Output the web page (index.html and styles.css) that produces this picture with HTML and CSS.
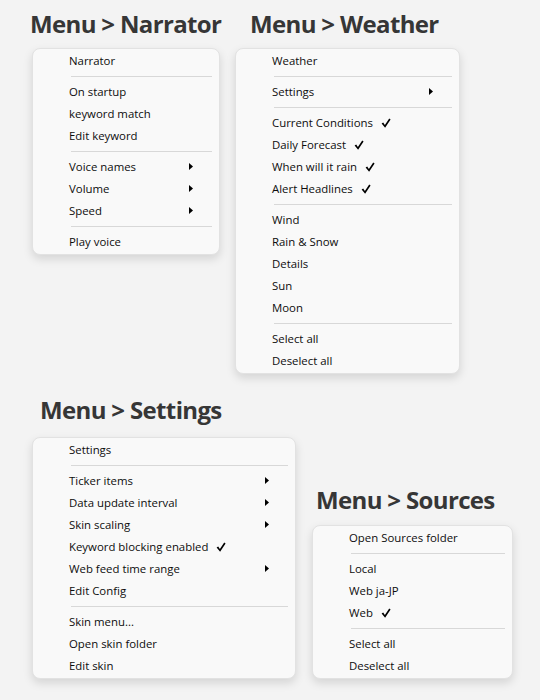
FILE: index.html
```html
<!DOCTYPE html>
<html lang="en">
<head>
<meta charset="utf-8">
<title>Menus</title>
<link rel="stylesheet" href="styles.css">
</head>
<body>
<div class="canvas">
  <div class="row row-top">
    <section class="block b-narrator">
      <h2 class="title">Menu &gt; Narrator</h2>
      <div class="menu">
        <div class="item">Narrator</div>
        <div class="sep"></div>
        <div class="item">On startup</div>
        <div class="item">keyword match</div>
        <div class="item">Edit keyword</div>
        <div class="sep"></div>
        <div class="item sub">Voice names<svg class="arrow" viewBox="0 0 4 7"><polygon points="0,0 4,3.5 0,7"/></svg></div>
        <div class="item sub">Volume<svg class="arrow" viewBox="0 0 4 7"><polygon points="0,0 4,3.5 0,7"/></svg></div>
        <div class="item sub">Speed<svg class="arrow" viewBox="0 0 4 7"><polygon points="0,0 4,3.5 0,7"/></svg></div>
        <div class="sep"></div>
        <div class="item">Play voice</div>
      </div>
    </section>
    <section class="block b-weather">
      <h2 class="title">Menu &gt; Weather</h2>
      <div class="menu">
        <div class="item">Weather</div>
        <div class="sep"></div>
        <div class="item sub">Settings<svg class="arrow" viewBox="0 0 4 7"><polygon points="0,0 4,3.5 0,7"/></svg></div>
        <div class="sep"></div>
        <div class="item">Current Conditions<svg class="check" viewBox="0 0 10 10"><path d="M0.6 5.6 L2.2 4.5 L3.9 6.9 L8.2 0.4 L9.6 1.4 L4.1 9.8 Z"/></svg></div>
        <div class="item">Daily Forecast<svg class="check" viewBox="0 0 10 10"><path d="M0.6 5.6 L2.2 4.5 L3.9 6.9 L8.2 0.4 L9.6 1.4 L4.1 9.8 Z"/></svg></div>
        <div class="item">When will it rain<svg class="check" viewBox="0 0 10 10"><path d="M0.6 5.6 L2.2 4.5 L3.9 6.9 L8.2 0.4 L9.6 1.4 L4.1 9.8 Z"/></svg></div>
        <div class="item">Alert Headlines<svg class="check" viewBox="0 0 10 10"><path d="M0.6 5.6 L2.2 4.5 L3.9 6.9 L8.2 0.4 L9.6 1.4 L4.1 9.8 Z"/></svg></div>
        <div class="sep"></div>
        <div class="item">Wind</div>
        <div class="item">Rain &amp; Snow</div>
        <div class="item">Details</div>
        <div class="item">Sun</div>
        <div class="item">Moon</div>
        <div class="sep"></div>
        <div class="item">Select all</div>
        <div class="item">Deselect all</div>
      </div>
    </section>
  </div>
  <div class="row row-bottom">
    <section class="block b-settings">
      <h2 class="title">Menu &gt; Settings</h2>
      <div class="menu">
        <div class="item">Settings</div>
        <div class="sep"></div>
        <div class="item sub">Ticker items<svg class="arrow" viewBox="0 0 4 7"><polygon points="0,0 4,3.5 0,7"/></svg></div>
        <div class="item sub">Data update interval<svg class="arrow" viewBox="0 0 4 7"><polygon points="0,0 4,3.5 0,7"/></svg></div>
        <div class="item sub">Skin scaling<svg class="arrow" viewBox="0 0 4 7"><polygon points="0,0 4,3.5 0,7"/></svg></div>
        <div class="item">Keyword blocking enabled<svg class="check" viewBox="0 0 10 10"><path d="M0.6 5.6 L2.2 4.5 L3.9 6.9 L8.2 0.4 L9.6 1.4 L4.1 9.8 Z"/></svg></div>
        <div class="item sub">Web feed time range<svg class="arrow" viewBox="0 0 4 7"><polygon points="0,0 4,3.5 0,7"/></svg></div>
        <div class="item">Edit Config</div>
        <div class="sep"></div>
        <div class="item">Skin menu...</div>
        <div class="item">Open skin folder</div>
        <div class="item">Edit skin</div>
      </div>
    </section>
    <section class="block b-sources">
      <h2 class="title">Menu &gt; Sources</h2>
      <div class="menu">
        <div class="item">Open Sources folder</div>
        <div class="sep"></div>
        <div class="item">Local</div>
        <div class="item">Web ja-JP</div>
        <div class="item">Web<svg class="check" viewBox="0 0 10 10"><path d="M0.6 5.6 L2.2 4.5 L3.9 6.9 L8.2 0.4 L9.6 1.4 L4.1 9.8 Z"/></svg></div>
        <div class="sep"></div>
        <div class="item">Select all</div>
        <div class="item">Deselect all</div>
      </div>
    </section>
  </div>
</div>
</body>
</html>
```

FILE: styles.css
```css
html, body {
  margin: 0;
  padding: 0;
  background: #f3f3f3;
}

.canvas {
  width: 540px;
  height: 700px;
  font-family: "Open Sans", "Noto Sans", sans-serif;
}

.row {
  display: flex;
}

.row-top {
  align-items: flex-start;
  padding-top: 10px;
}

.row-bottom {
  align-items: flex-end;
  margin-top: 22px;
}

.block {
  flex: none;
}

.title {
  margin: 0;
  font-size: 24px;
  line-height: 28px;
  font-weight: 700;
  color: #363636;
  white-space: nowrap;
  letter-spacing: -0.65px;
}

.menu {
  background: #f9f9f9;
  border: 1px solid #e2e2e2;
  border-radius: 8px;
  box-sizing: border-box;
  padding: 1px 0;
  box-shadow: 0 4px 10px rgba(0, 0, 0, 0.13);
}

.item {
  box-sizing: border-box;
  height: 22px;
  display: flex;
  align-items: center;
  padding: 0 26px 2px 36px;
  font-size: 11.4px;
  color: #0d0d0d;
  white-space: nowrap;
}

.item.sub {
  justify-content: space-between;
}

.arrow {
  width: 4px;
  height: 7px;
  fill: #000;
  margin-top: 1px;
}

.check {
  width: 10px;
  height: 10px;
  margin-left: 8px;
  fill: #000;
  margin-top: 1px;
}

.sep {
  height: 1px;
  background: #d8d8d8;
  margin: 4px 7px 4px 38px;
}

.b-narrator {
  margin-left: 32px;
  width: 188px;
}
.b-narrator .title {
  margin-left: -2px;
  margin-bottom: 10px;
}

.b-weather {
  margin-left: 15px;
  width: 225px;
}
.b-weather .title {
  margin-left: 15px;
  margin-bottom: 10px;
}

.b-settings {
  margin-left: 32px;
  width: 264px;
}
.b-settings .title {
  margin-left: 8px;
  margin-bottom: 13px;
}

.b-sources {
  margin-left: 16px;
  width: 201px;
}
.b-sources .title {
  margin-left: 4px;
  margin-bottom: 11px;
}
```
